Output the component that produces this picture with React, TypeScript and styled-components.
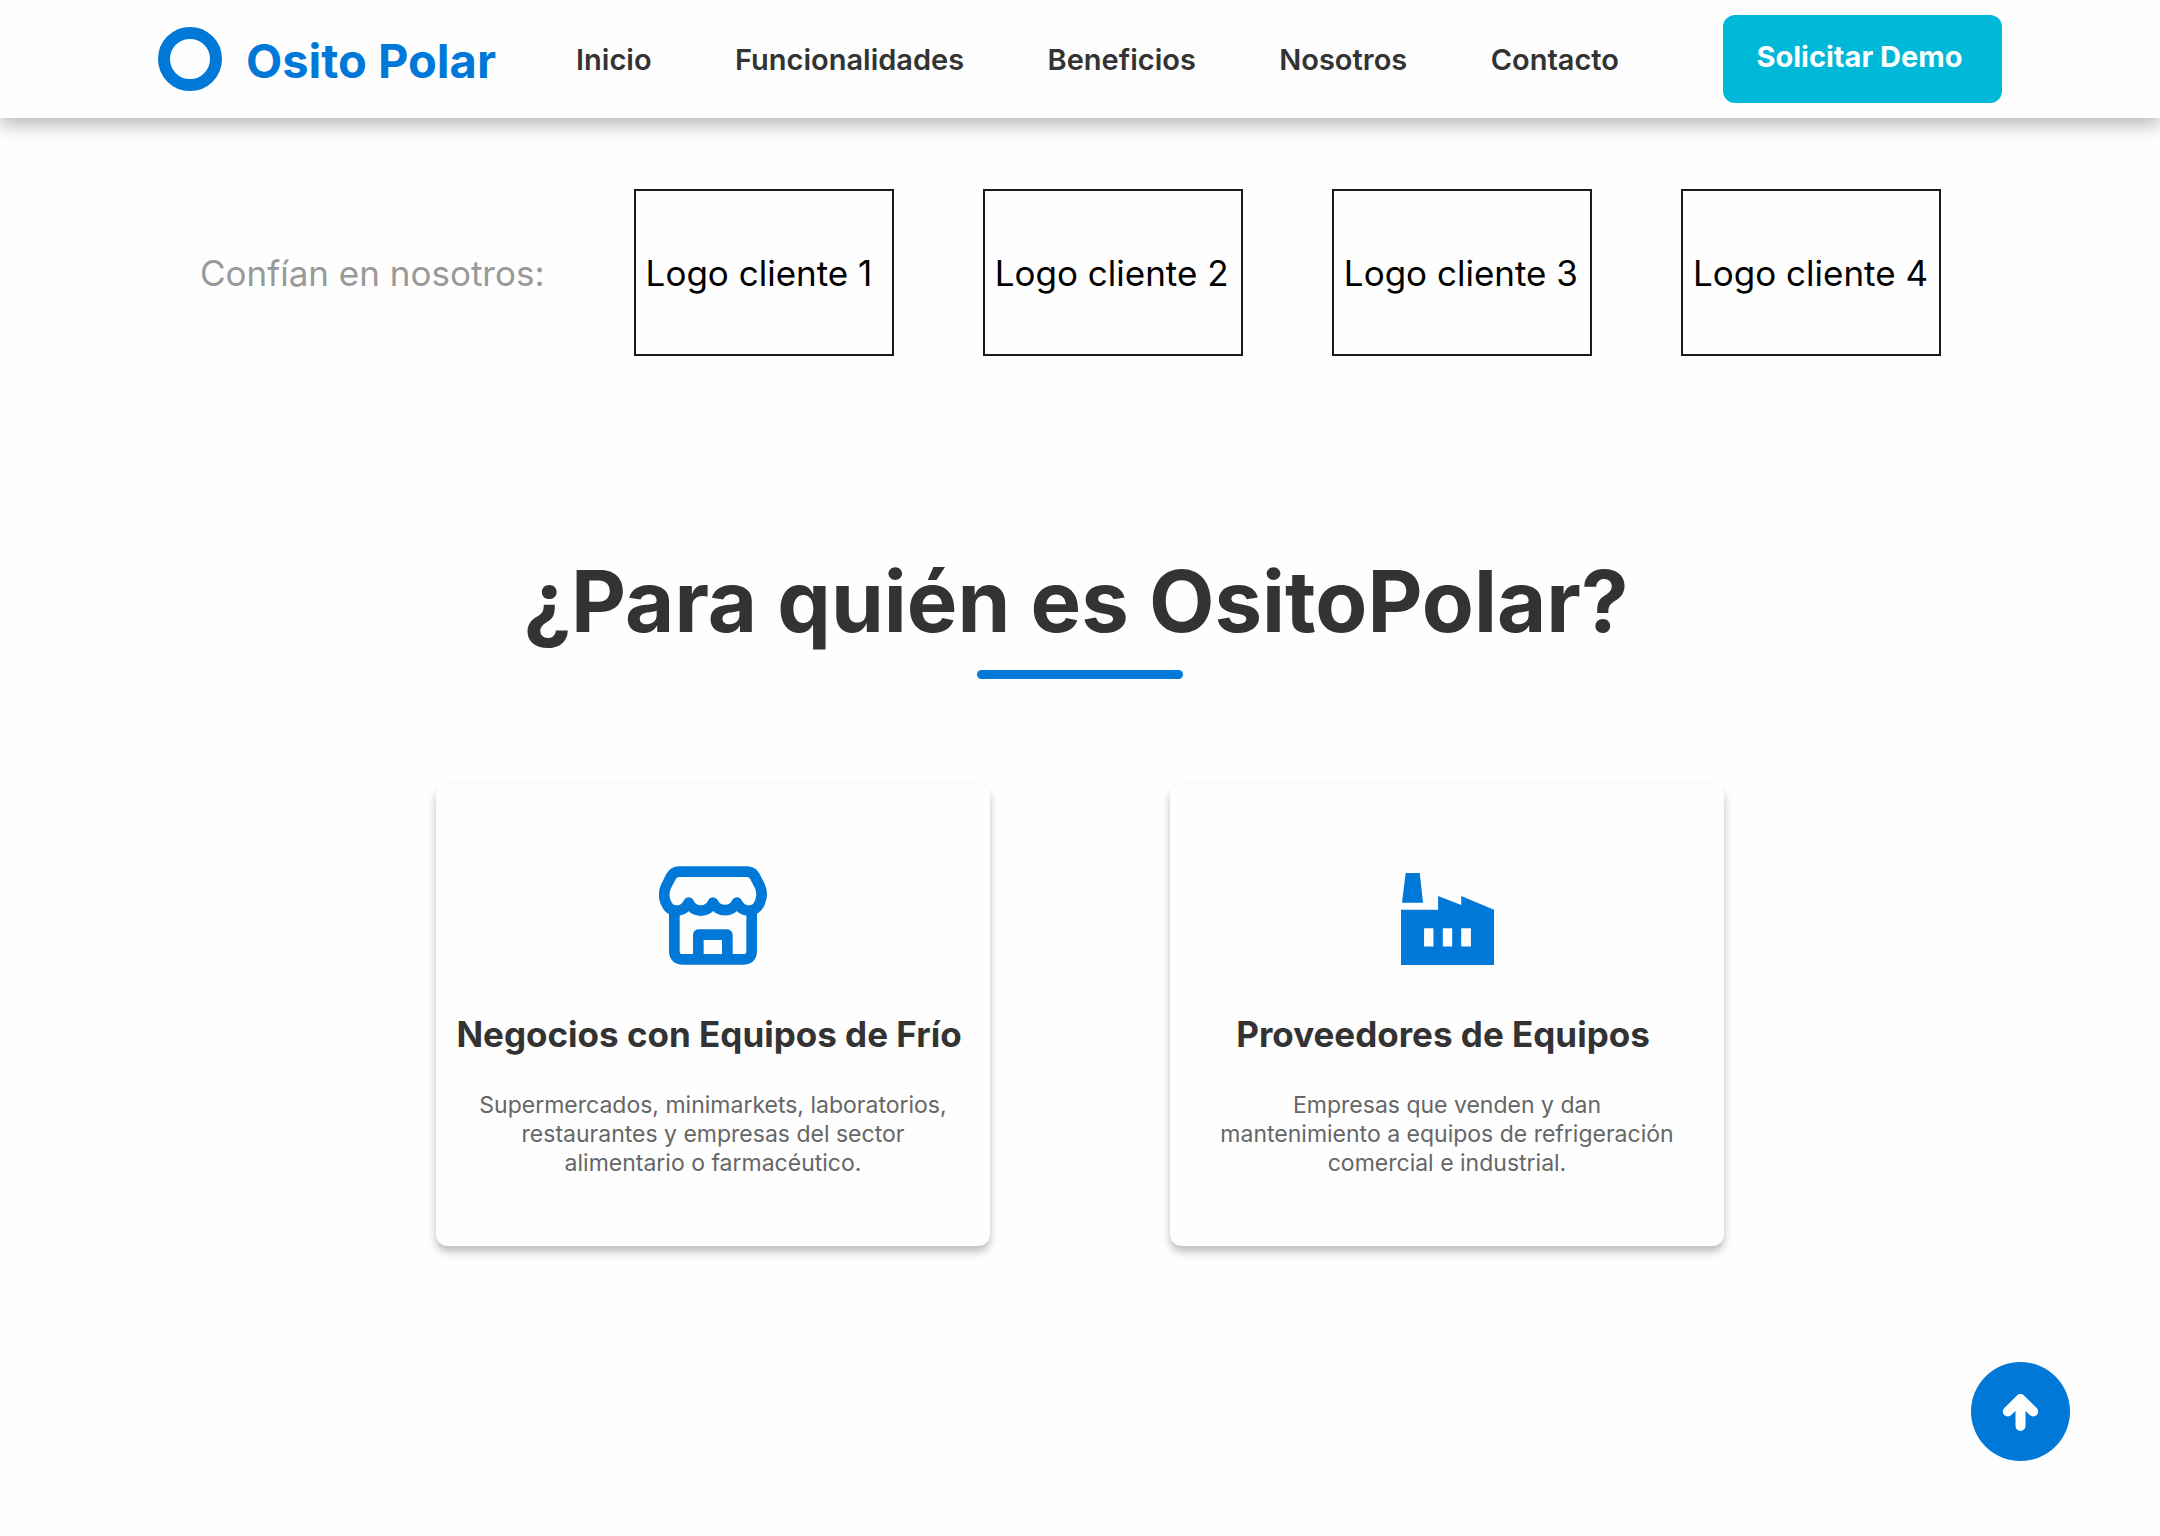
import React from "react";
import styled, { createGlobalStyle } from "styled-components";

const blue = "#0078d8";
const ink = "#333333";
const surface = "#fefefe";

const GlobalStyle = createGlobalStyle`
  *, *::before, *::after { box-sizing: border-box; }
  body {
    margin: 0;
    background: ${surface};
    color: ${ink};
    font-family: Inter, "Liberation Sans", sans-serif;
  }
`;

const Header = styled.header`
  display: flex;
  align-items: center;
  height: 118px;
  padding: 0 158px;
  background: ${surface};
  box-shadow: 0 8px 16px rgba(0, 0, 0, 0.25);
`;

const Brand = styled.a`
  display: flex;
  align-items: center;
  gap: 24px;
  color: ${blue};
  text-decoration: none;
`;

const Ring = styled.span`
  width: 64px;
  height: 64px;
  border: 12px solid ${blue};
  border-radius: 50%;
`;

const BrandName = styled.span`
  padding-top: 4px;
  font-size: 47px;
  line-height: 60px;
  font-weight: 700;
  white-space: nowrap;
`;

const Nav = styled.nav`
  display: flex;
  flex: 1;
  justify-content: space-between;
  margin: 0 104px 0 80px;
`;

const NavLink = styled.a`
  padding-top: 1px;
  color: ${ink};
  font-size: 29px;
  line-height: 36px;
  font-weight: 600;
  text-decoration: none;
`;

const DemoButton = styled.button`
  width: 279px;
  height: 88px;
  padding: 0 6px 4px 0;
  border: 0;
  border-radius: 12px;
  background: #00b8d8;
  color: #ffffff;
  font: 700 29px/36px Inter, "Liberation Sans", sans-serif;
  white-space: nowrap;
  cursor: pointer;
`;

const Clients = styled.section`
  display: flex;
  align-items: center;
  justify-content: space-between;
  padding: 71px 219px 0 200px;
  font-size: 35px;
  line-height: 44px;
`;

const ClientsLabel = styled.p`
  margin: 0;
  color: #999999;
  white-space: nowrap;
`;

const ClientLogo = styled.div`
  display: flex;
  align-items: center;
  width: 260px;
  height: 167px;
  padding-left: 10px;
  border: 2px solid #1a1a1a;
  color: #000000;
  white-space: nowrap;
`;

const Audience = styled.section`
  display: flex;
  flex-direction: column;
  align-items: center;
  padding: 192px 0 120px;
`;

const Heading = styled.h2`
  margin: 0;
  padding-right: 8px;
  font-size: 85px;
  line-height: 108px;
  font-weight: 700;
  text-align: center;
`;

const Underline = styled.span`
  width: 206px;
  height: 9px;
  margin-top: 14px;
  border-radius: 5px;
  background: ${blue};
`;

const Cards = styled.div`
  display: flex;
  justify-content: center;
  gap: 180px;
  margin-top: 105px;
`;

const Card = styled.article`
  display: flex;
  flex-direction: column;
  align-items: center;
  width: 554px;
  height: 462px;
  padding: 81px 16px 0;
  border-radius: 12px;
  background: ${surface};
  box-shadow: 0 6px 8px rgba(0, 0, 0, 0.25);
`;

const IconBox = styled.div`
  display: flex;
  align-items: flex-end;
  height: 100px;
`;

const CardTitle = styled.h3`
  margin: 47px 0 0;
  padding-right: 8px;
  font-size: 35px;
  line-height: 44px;
  font-weight: 700;
  white-space: nowrap;
`;

const CardText = styled.p`
  margin: 35px 0 0;
  color: #666666;
  font-size: 23px;
  line-height: 29px;
  text-align: center;
  white-space: pre-line;
`;

const TopButton = styled.button`
  position: fixed;
  right: 90px;
  bottom: 75px;
  width: 99px;
  height: 99px;
  padding: 0;
  border: 0;
  border-radius: 50%;
  background: ${blue};
  cursor: pointer;
  svg { display: block; }
`;

const StoreIcon = () => (
  <svg width="108" height="99" viewBox="58 78 324 297" fill="none" stroke={blue} strokeWidth="32" strokeLinejoin="round" aria-hidden="true">
    <path d="M118 95H322Q337 95 345 108L361 139C374 171 358 212 329 212Q305 212 292 188A40 40 0 0 1 220 188A40 40 0 0 1 147 188Q134 212 110 212C81 212 65 171 79 139L95 108Q103 95 118 95Z" />
    <path d="M104 205V332Q104 358 130 358H310Q336 358 336 332V205" />
    <path d="M176 358V284H263V358" />
  </svg>
);

const FactoryIcon = () => (
  <svg width="93" height="92" viewBox="63 69 278 275" fill={blue} aria-hidden="true">
    <path d="M77 69H119L129 158H66Z" />
    <path fillRule="evenodd" d="M63 179H174V138L243 165V138L341 179V344H63ZM132 234V289H160V234ZM188 234V289H216V234ZM243 234V289H272V234Z" />
  </svg>
);

const ArrowUp = () => (
  <svg width="99" height="99" viewBox="0 0 99 99" fill="none" stroke="#fff" strokeWidth="10" strokeLinecap="round" strokeLinejoin="round" aria-hidden="true">
    <path d="M49.5 64V37M36.8 49.5L49.5 37L62.2 49.5" />
    <path d="M44 43H55" />
  </svg>
);

const links = ["Inicio", "Funcionalidades", "Beneficios", "Nosotros", "Contacto"];
const clients = [1, 2, 3, 4];
const audiences = [
  {
    title: "Negocios con Equipos de Frío",
    text: "Supermercados, minimarkets, laboratorios,\nrestaurantes y empresas del sector\nalimentario o farmacéutico.",
    icon: <StoreIcon />,
  },
  {
    title: "Proveedores de Equipos",
    text: "Empresas que venden y dan\nmantenimiento a equipos de refrigeración\ncomercial e industrial.",
    icon: <FactoryIcon />,
  },
];

export default function App() {
  return (
    <>
      <GlobalStyle />
      <Header>
        <Brand href="#inicio">
          <Ring />
          <BrandName>Osito Polar</BrandName>
        </Brand>
        <Nav>
          {links.map((link) => (
            <NavLink key={link} href={`#${link.toLowerCase()}`}>{link}</NavLink>
          ))}
        </Nav>
        <DemoButton type="button">Solicitar Demo</DemoButton>
      </Header>
      <main>
        <Clients>
          <ClientsLabel>Confían en nosotros:</ClientsLabel>
          {clients.map((n) => (
            <ClientLogo key={n}>{`Logo cliente ${n}`}</ClientLogo>
          ))}
        </Clients>
        <Audience>
          <Heading>¿Para quién es OsitoPolar?</Heading>
          <Underline />
          <Cards>
            {audiences.map((a) => (
              <Card key={a.title}>
                <IconBox>{a.icon}</IconBox>
                <CardTitle>{a.title}</CardTitle>
                <CardText>{a.text}</CardText>
              </Card>
            ))}
          </Cards>
        </Audience>
      </main>
      <TopButton type="button" aria-label="Volver arriba">
        <ArrowUp />
      </TopButton>
    </>
  );
}
